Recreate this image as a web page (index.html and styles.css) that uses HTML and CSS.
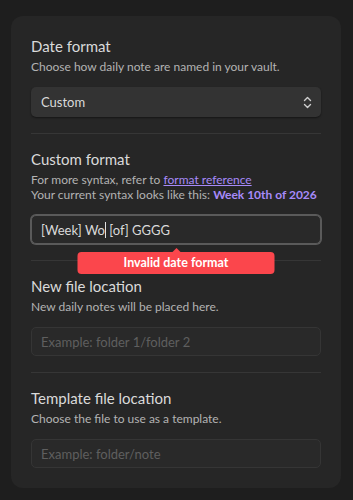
FILE: index.html
```html
<!DOCTYPE html>
<html>
<head>
  <meta charset="UTF-8">
  <title>Daily notes settings</title>
  <link rel="stylesheet" href="styles.css">
</head>
<body>
  <div class="card">
    <div class="setting">
      <div class="name">Date format</div>
      <div class="desc">Choose how daily note are named in your vault.</div>
      <div class="select">
        <span>Custom</span>
        <svg class="chevrons" width="9" height="13" viewBox="0 0 9 13">
          <path d="M1.5 4.5 L4.5 1.5 L7.5 4.5 M1.5 8.5 L4.5 11.5 L7.5 8.5" fill="none" stroke="#cfcfcf" stroke-width="1.4" stroke-linecap="round" stroke-linejoin="round"/>
        </svg>
      </div>
    </div>

    <div class="setting">
      <div class="name">Custom format</div>
      <div class="desc">
        For more syntax, refer to <a href="#" class="link">format reference</a><br>
        Your current syntax looks like this: <strong class="accent">Week 10th of 2026</strong>
      </div>
      <div class="field-wrap">
        <div class="field focused">[Week] Wo<span class="caret"></span> [of] GGGG</div>
        <div class="tooltip">Invalid date format</div>
      </div>
    </div>

    <div class="setting">
      <div class="name">New file location</div>
      <div class="desc">New daily notes will be placed here.</div>
      <div class="field placeholder">Example: folder 1/folder 2</div>
    </div>

    <div class="setting">
      <div class="name">Template file location</div>
      <div class="desc">Choose the file to use as a template.</div>
      <div class="field placeholder">Example: folder/note</div>
    </div>
  </div>
</body>
</html>
```

FILE: styles.css
```css
body {
  margin: 0;
  padding: 16px 12px 12px 11px;
  background: #1e1e1e;
  font-family: Lato, "Noto Sans", sans-serif;
  color: #dadada;
}

.card {
  width: 330px;
  box-sizing: border-box;
  padding: 5px 20px 4px;
  background: #262626;
  border-radius: 12px;
}

.setting {
  padding: 15px 0 16px;
  border-top: 1px solid #363636;
}

.setting:first-child {
  border-top: none;
}

.name {
  font-size: 15px;
  line-height: 20px;
  color: #dadada;
  white-space: nowrap;
}

.desc {
  margin-top: 3px;
  font-size: 12px;
  line-height: 15px;
  color: #b3b3b3;
  white-space: nowrap;
}

.link {
  color: #a68af9;
  text-decoration: underline;
}

.accent {
  color: #a68af9;
  font-weight: 700;
}

.select {
  margin-top: 13px;
  height: 30px;
  box-sizing: border-box;
  padding: 0 9px 0 10px;
  display: flex;
  align-items: center;
  justify-content: space-between;
  background: #333333;
  border-radius: 5px;
  box-shadow: 0 1px 2px rgba(0, 0, 0, 0.45);
  font-size: 13px;
  color: #dadada;
}

.field-wrap {
  position: relative;
}

.field {
  margin-top: 13px;
  height: 29px;
  box-sizing: border-box;
  padding: 0 9px;
  display: flex;
  align-items: center;
  background: #292929;
  border: 1px solid #353535;
  border-radius: 5px;
  font-size: 13px;
  color: #dadada;
  white-space: pre;
}

.field.focused {
  border-color: #5a5a5a;
  box-shadow: 0 0 0 1px #5a5a5a;
}

.field.placeholder {
  color: #5f5f5f;
}

.caret {
  display: inline-block;
  width: 1px;
  height: 16px;
  background: #e0e0e0;
}

.tooltip {
  position: absolute;
  top: calc(100% + 8px);
  left: 50%;
  transform: translateX(-50%);
  width: 197px;
  height: 22px;
  line-height: 22px;
  text-align: center;
  background: #fb464c;
  color: #ffffff;
  font-size: 12.5px;
  font-weight: 700;
  border-radius: 4px;
  z-index: 2;
}

.tooltip::before {
  content: "";
  position: absolute;
  top: -4px;
  left: 50%;
  margin-left: -4px;
  border-left: 4px solid transparent;
  border-right: 4px solid transparent;
  border-bottom: 4px solid #fb464c;
}
```
